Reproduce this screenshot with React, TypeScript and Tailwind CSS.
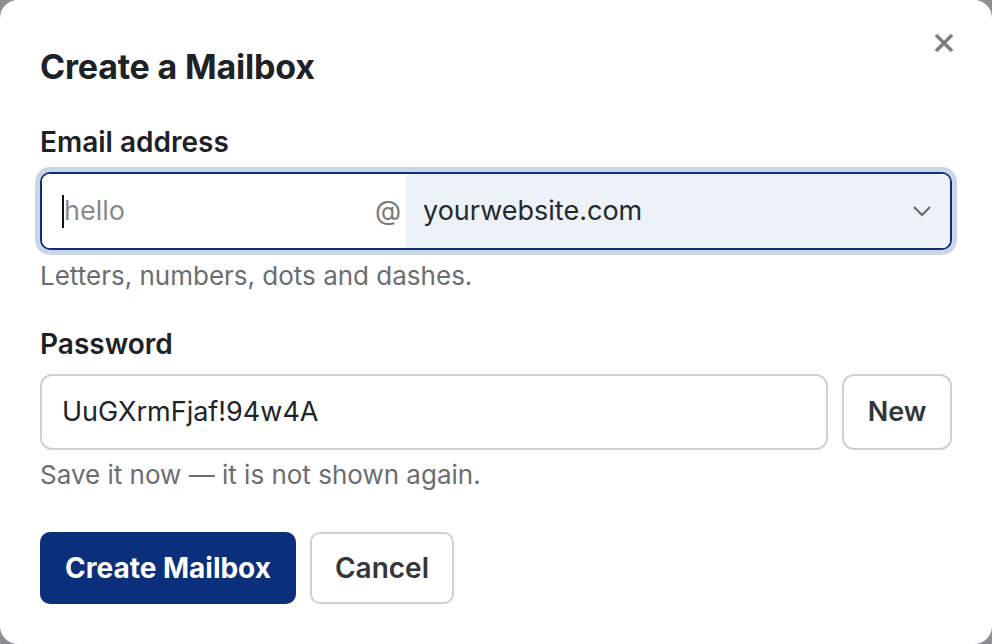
import React from 'react'

const font = { fontFamily: 'Inter, "Noto Sans", sans-serif' }

function CloseIcon() {
  return (
    <svg width="22" height="22" viewBox="0 0 22 22" className="text-[#7d7f82]">
      <path d="M3 3 L19 19 M19 3 L3 19" stroke="currentColor" strokeWidth="3.6" strokeLinecap="butt" />
    </svg>
  )
}

function Chevron() {
  return (
    <svg width="20" height="12" viewBox="0 0 20 12" className="text-[#6a6d70]">
      <path d="M2 2 L10 10 L18 2" fill="none" stroke="currentColor" strokeWidth="2.2" />
    </svg>
  )
}

export default function App() {
  return (
    <div className="w-[992px] h-[644px] bg-[#8d8e92]" style={font}>
      <div className="relative h-full w-full rounded-[18px] bg-white px-10 pt-[47px]">
        <button className="absolute right-[37px] top-[32px]">
          <CloseIcon />
        </button>

        <h1 className="text-[34px] leading-[40px] font-bold text-[#1e2125] tracking-[-0.2px]">Create a Mailbox</h1>

        <label className="mt-[38px] block text-[28px] leading-[34px] font-semibold text-[#1e2125]">Email address</label>
        <div className="mt-[13px] flex h-[78px] overflow-hidden rounded-[10px] border-2 border-[#0b2f77] ring-[5px] ring-[#ccd5e6]">
          <div className="flex w-[364px] items-center bg-white pl-5 pr-[5px]">
            <span className="h-[33px] w-[2px] bg-[#111]" />
            <span className="flex-1 text-[27px] text-[#8a8a8a]">hello</span>
            <span className="text-[27px] text-[#7a7a7a]">@</span>
          </div>
          <div className="flex flex-1 items-center justify-between bg-[#edf1f8] pl-[17px] pr-[18px]">
            <span className="text-[27px] text-[#25282c]">yourwebsite.com</span>
            <Chevron />
          </div>
        </div>
        <p className="mt-[11px] text-[26px] leading-[30px] text-[#6b6d70]">Letters, numbers, dots and dashes.</p>

        <label className="mt-[36px] block text-[28px] leading-[34px] font-semibold text-[#1e2125]">Password</label>
        <div className="mt-[13px] flex gap-[14px]">
          <div className="flex h-[76px] flex-1 items-center rounded-[12px] border-2 border-[#cdd1d6] px-5 text-[27px] text-[#202327]">
            UuGXrmFjaf!94w4A
          </div>
          <button className="h-[76px] w-[110px] rounded-[12px] border-2 border-[#cdd1d6] text-[27px] font-semibold text-[#33363a]">
            New
          </button>
        </div>
        <p className="mt-[10px] text-[26px] leading-[30px] text-[#6b6d70]">Save it now — it is not shown again.</p>

        <div className="mt-[42px] flex gap-[14px]">
          <button className="h-[72px] w-[256px] rounded-[10px] bg-[#0a2f7b] text-[28px] font-bold text-white">
            Create Mailbox
          </button>
          <button className="h-[72px] w-[144px] rounded-[10px] border-2 border-[#cdd1d6] text-[28px] font-semibold text-[#33363a]">
            Cancel
          </button>
        </div>
      </div>
    </div>
  )
}
